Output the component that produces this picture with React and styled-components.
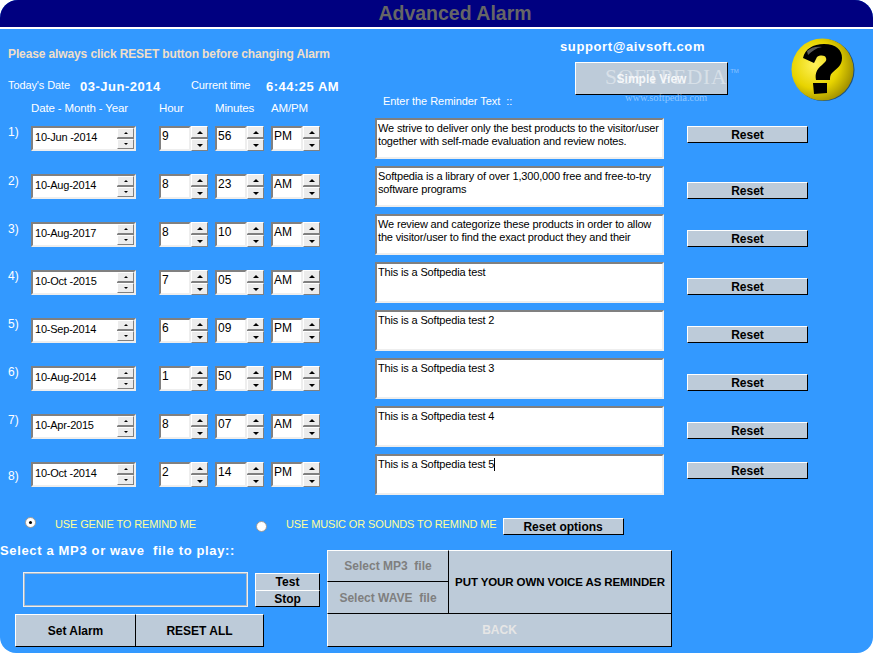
import React from 'react';
import styled, { createGlobalStyle } from 'styled-components';

const Global = createGlobalStyle`
  html, body { margin: 0; padding: 0; background: #fff; }
  body { font-family: "Liberation Sans", Arial, sans-serif; }
`;

const Windowed = styled.div`
  width: 873px; height: 653px; background: #3399ff; border-radius: 18px 18px 16px 16px;
  overflow: hidden; position: relative; color: #fff;
`;
const TitleBar = styled.div`
  height: 27px; background: #000080; border-bottom: 2px solid #fff; box-sizing: content-box;
  display: flex; align-items: center; justify-content: center; padding-left: 37px;
  font-size: 19.5px; font-weight: 700; color: #666;
`;
const Header = styled.div`
  display: grid; grid-template-columns: 375px 416px 1fr; height: 89px;
`;
const HeaderLeft = styled.div`
  display: flex; flex-direction: column; padding-left: 8px;
`;
const Notice = styled.div`
  margin-top: 18px; font-size: 12px; font-weight: 700; color: #f0dfc8; line-height: 14px; letter-spacing: -.12px;
`;
const DateLine = styled.div`
  margin-top: 17px; display: flex; align-items: center; height: 16px;
`;
const Thin = styled.span`
  color: #fff; width: ${p => p.$w}px; font-size: 11px; letter-spacing: -.1px; margin-bottom: 2px;
`;
const Strong = styled.span`
  font-weight: 700; font-size: 13px; width: ${p => p.$w}px; letter-spacing: .5px;
`;
const Columns = styled.div`
  display: flex; margin-left: 23px; padding-top: 7px; font-size: 11.5px; line-height: 14px; letter-spacing: -.15px;
`;
const ColumnLabel = styled.span`
  width: ${p => p.$w}px;
`;
const HeaderMiddle = styled.div`
  display: flex; flex-direction: column; position: relative;
`;
const Support = styled.div`
  margin: 10px 0 0 185px; font-size: 13px; font-weight: 700; letter-spacing: .62px; line-height: 15px;
`;
const SimpleView = styled.button`
  margin: 8px 0 0 200px; width: 153px; height: 33px; box-sizing: border-box; padding: 0;
  background: #bdcbd9; border: 1px solid #fff; border-right: 1px solid #000; border-bottom: 1px solid #000;
  font: 700 12px "Liberation Sans", sans-serif; color: rgba(255,255,255,.85);
`;
const EnterText = styled.div`
  margin: -1px 0 0 8px; font-size: 11px; line-height: 14px; letter-spacing: -.05px;
`;
const Watermark = styled.div`
  position: absolute; left: 230px; top: 36px; font: 400 21.5px "Liberation Serif", serif;
  letter-spacing: .7px; color: rgba(255,255,255,.42); white-space: nowrap; pointer-events: none;
`;
const TradeMark = styled.sup`
  font: 400 6px "Liberation Sans", sans-serif; vertical-align: 11px; margin-left: 3px; letter-spacing: 0;
`;
const WatermarkUrl = styled.div`
  position: absolute; left: 250px; top: 63px; font: 400 10.5px "Liberation Serif", serif; letter-spacing: -.1px;
  color: rgba(255,255,255,.45); white-space: nowrap;
`;
const HelpBox = styled.div`
  padding-top: 1px; margin-left: -11px;
`;
const Rows = styled.div`
  display: flex; flex-direction: column;
`;
const Row = styled.div`
  display: flex; align-items: flex-start; height: 48px; padding-left: 8px;
`;
const RowLabel = styled.div`
  width: 23px; flex: none; font-size: 12px; line-height: 14px; margin-top: ${p => p.$top}px;
`;
const Inset = styled.div`
  display: flex; flex: none; box-sizing: border-box; height: 25px; margin-top: 8px; background: #fff;
  border: 2px solid #eee; border-top-color: #808080; border-left-color: #808080;
`;
const DateBox = styled(Inset)`
  width: 105px; margin-right: 23px; align-items: flex-start; justify-content: space-between;
`;
const DateValue = styled.span`
  color: #000; font-size: 11px; line-height: 18px; padding-left: 2px; letter-spacing: -.22px;
`;
const NumberField = styled.div`
  display: flex; flex: none; width: 49px; margin-right: 7px; margin-top: 8px; height: 25px;
`;
const NumberValue = styled(Inset)`
  flex: 1; margin-top: 0; color: #000; font-size: 12px; line-height: 17px; padding-left: 1px;
`;
const Spin = styled.div`
  display: flex; flex-direction: column; gap: 1px; background: #808080; width: ${p => p.$w}px; flex: none;
  height: ${p => p.$h}px; justify-content: space-between;
`;
const SpinButton = styled.div`
  flex: 1; background: #ececec; border-top: 1px solid #fff; border-left: 1px solid #fff;
  border-right: 1px solid #808080; border-bottom: 1px solid #808080;
  display: flex; align-items: center; justify-content: center;
`;
const Arrow = styled.i`
  width: 0; height: 0; border-left: ${p => p.$s}px solid transparent; border-right: ${p => p.$s}px solid transparent;
  ${p => p.$down ? `border-top: ${p.$s}px solid #000;` : `border-bottom: ${p.$s}px solid #000;`}
`;
const ReminderBox = styled.div`
  flex: none; box-sizing: border-box; width: 289px; height: 41px; margin-left: 48px; background: #fff; color: #000;
  border: 2px solid #eee; border-top-color: #808080; border-left-color: #808080; padding: 2px 1px 0;
  font-size: 11px; line-height: 13px; white-space: pre; letter-spacing: -.16px; overflow: hidden;
`;
const Caret = styled.span`
  display: inline-block; width: 1px; height: 13px; background: #000; vertical-align: top;
`;
const Flat = styled.button`
  box-sizing: border-box; padding: 0; background: #bdcbd9; border: 1px solid #fff;
  border-right-color: #000; border-bottom-color: #000; color: #000; white-space: nowrap;
  font: 700 12px "Liberation Sans", sans-serif;
`;
const RowReset = styled(Flat)`
  width: 121px; height: 17px; margin: ${p => p.$top}px 0 0 23px; flex: none;
`;
const Options = styled.div`
  display: flex; align-items: flex-start; height: 36px; margin-top: 15px;
  font-size: 11px; color: #ffff99; letter-spacing: -.13px;
`;
const Radio = styled.span`
  flex: none; box-sizing: border-box; width: 11px; height: 11px; border-radius: 50%; background: #fff;
  border: 1px solid #999; margin: ${p => p.$top}px 0 0 ${p => p.$left}px;
  display: flex; align-items: center; justify-content: center;
`;
const Dot = styled.span`
  width: 3px; height: 3px; border-radius: 50%; background: #000;
`;
const OptionLabel = styled.span`
  margin: 0 0 0 ${p => p.$left}px; line-height: 14px; white-space: nowrap;
`;
const ResetOptions = styled(Flat)`
  width: 121px; height: 17px; margin: 1px 0 0 6px; flex: none;
`;
const Bottom = styled.div`
  display: flex; margin-top: -3px;
`;
const BottomLeft = styled.div`
  width: 327px; flex: none; display: flex; flex-direction: column;
`;
const SelectLabel = styled.div`
  font-size: 13px; font-weight: 700; line-height: 15px; letter-spacing: .65px; margin-top: -7px;
`;
const PlayRow = styled.div`
  display: flex; margin: 14px 0 0 23px; align-items: flex-end;
`;
const PathBox = styled.div`
  box-sizing: border-box; width: 225px; height: 35px; border: 1px solid #eee;
  box-shadow: inset 0 0 0 1px #a9b8c8;
`;
const TestStop = styled.div`
  display: flex; flex-direction: column; margin-left: 7px; width: 65px;
`;
const TestButton = styled(Flat)`
  height: 17px; line-height: 14px;
  ${p => p.$top && 'border-bottom: none;'}
`;
const Actions = styled.div`
  display: flex; margin: 7px 0 0 15px;
`;
const ActionButton = styled(Flat)`
  width: ${p => p.$w}px; height: 33px;
  ${p => p.$joined && 'border-left: none;'}
`;
const Panel = styled.div`
  display: grid; grid-template-columns: 121px 224px; grid-template-rows: 32px 32px 33px; width: 345px;
`;
const Disabled = styled(Flat)`
  color: #7f7f7f; border-right: none;
  ${p => p.$joined && 'border-top: none;'}
`;
const Voice = styled(Flat)`
  grid-column: 2; grid-row: 1 / span 2; font-size: 11.5px; letter-spacing: -.1px; border-left: 1px solid #000;
`;
const Back = styled(Flat)`
  grid-column: 1 / span 2; color: #e6e6e6; border-top: none;
`;

const HelpIcon = () => (
  <svg width="93" height="80" viewBox="0 0 93 80" aria-hidden="true">
    <defs>
      <radialGradient id="ball" cx="38%" cy="42%" r="70%">
        <stop offset="0%" stopColor="#fff25a" />
        <stop offset="55%" stopColor="#e8d400" />
        <stop offset="100%" stopColor="#8f7f00" />
      </radialGradient>
    </defs>
    <circle cx="43.5" cy="40" r="31" fill="#1c4f7c" />
    <circle cx="42.5" cy="39.5" r="31" fill="url(#ball)" />
    <path d="M23 28 C25 19 33 14 44 14 C56 14 62 20 62 28 C62 36 56 39 52 43 C50 45 50 47 50 50 L36 50 C35 44 36 40 42 35 C45 32 47 31 46 28 C45 25 40 25 37 27 C36 29 35 31 34 33 Z" fill="#000" />
    <path d="M33 53 L47 53 L47 63 L34 64 Z" fill="#000" />
    <path d="M27 21 C31 17 37 16 42 17 C36 18 32 21 28 25 Z" fill="#5a5a5a" />
  </svg>
);

const Spinner = ({ small }) => (
  <Spin $w={17} $h={small ? 21 : 25}>
    <SpinButton><Arrow $s={small ? 2 : 3} /></SpinButton>
    <SpinButton><Arrow $s={small ? 2 : 3} $down /></SpinButton>
  </Spin>
);

const NumberBox = ({ value }) => (
  <NumberField>
    <NumberValue>{value}</NumberValue>
    <Spinner />
  </NumberField>
);

const rows = [
  ['10-Jun -2014', '9', '56', 'PM', 'We strive to deliver only the best products to the visitor/user\ntogether with self-made evaluation and review notes.', 7, 8],
  ['10-Aug-2014', '8', '23', 'AM', 'Softpedia is a library of over 1,300,000 free and free-to-try\nsoftware programs', 8, 16],
  ['10-Aug-2017', '8', '10', 'AM', 'We review and categorize these products in order to allow\nthe visitor/user to find the exact product they and their', 8, 16],
  ['10-Oct -2015', '7', '05', 'AM', 'This is a Softpedia test', 7, 16],
  ['10-Sep-2014', '6', '09', 'PM', 'This is a Softpedia test 2', 7, 16],
  ['10-Aug-2014', '1', '50', 'PM', 'This is a Softpedia test 3', 7, 16],
  ['10-Apr-2015', '8', '07', 'AM', 'This is a Softpedia test 4', 7, 16],
  ['10-Oct -2014', '2', '14', 'PM', 'This is a Softpedia test 5', 15, 8],
];

export default function App() {
  return (
    <>
      <Global />
      <Windowed>
        <TitleBar>Advanced Alarm</TitleBar>
        <Header>
          <HeaderLeft>
            <Notice>Please always click RESET button before changing Alarm</Notice>
            <DateLine>
              <Thin $w={72}>Today's Date</Thin>
              <Strong $w={111}>03-Jun-2014</Strong>
              <Thin $w={75}>Current time</Thin>
              <Strong $w={80}>6:44:25 AM</Strong>
            </DateLine>
            <Columns>
              <ColumnLabel $w={128}>Date - Month - Year</ColumnLabel>
              <ColumnLabel $w={56}>Hour</ColumnLabel>
              <ColumnLabel $w={56}>Minutes</ColumnLabel>
              <ColumnLabel $w={50}>AM/PM</ColumnLabel>
            </Columns>
          </HeaderLeft>
          <HeaderMiddle>
            <Support>support@aivsoft.com</Support>
            <SimpleView>Simple View</SimpleView>
            <EnterText>Enter the Reminder Text&nbsp; ::</EnterText>
            <Watermark>SOFTPEDIA<TradeMark>TM</TradeMark></Watermark>
            <WatermarkUrl>www.softpedia.com</WatermarkUrl>
          </HeaderMiddle>
          <HelpBox><HelpIcon /></HelpBox>
        </Header>
        <Rows>
          {rows.map((r, i) => (
            <Row key={i}>
              <RowLabel $top={r[5]}>{i + 1})</RowLabel>
              <DateBox>
                <DateValue>{r[0]}</DateValue>
                <Spinner small />
              </DateBox>
              <NumberBox value={r[1]} />
              <NumberBox value={r[2]} />
              <NumberBox value={r[3]} />
              <ReminderBox>{r[4]}{i === 7 && <Caret />}</ReminderBox>
              <RowReset $top={r[6]}>Reset</RowReset>
            </Row>
          ))}
        </Rows>
        <Options>
          <Radio $left={25} $top={0}><Dot /></Radio>
          <OptionLabel $left={19}>USE GENIE TO REMIND ME</OptionLabel>
          <Radio $left={60} $top={4} />
          <OptionLabel $left={19}>USE MUSIC OR SOUNDS TO REMIND ME</OptionLabel>
          <ResetOptions>Reset options</ResetOptions>
        </Options>
        <Bottom>
          <BottomLeft>
            <SelectLabel>Select a MP3 or wave&nbsp; file to play::</SelectLabel>
            <PlayRow>
              <PathBox />
              <TestStop>
                <TestButton $top>Test</TestButton>
                <TestButton>Stop</TestButton>
              </TestStop>
            </PlayRow>
            <Actions>
              <ActionButton $w={121}>Set Alarm</ActionButton>
              <ActionButton $w={128} $joined>RESET ALL</ActionButton>
            </Actions>
          </BottomLeft>
          <Panel>
            <Disabled>Select MP3&nbsp; file</Disabled>
            <Voice>PUT YOUR OWN VOICE AS REMINDER</Voice>
            <Disabled $joined>Select WAVE&nbsp; file</Disabled>
            <Back>BACK</Back>
          </Panel>
        </Bottom>
      </Windowed>
    </>
  );
}
